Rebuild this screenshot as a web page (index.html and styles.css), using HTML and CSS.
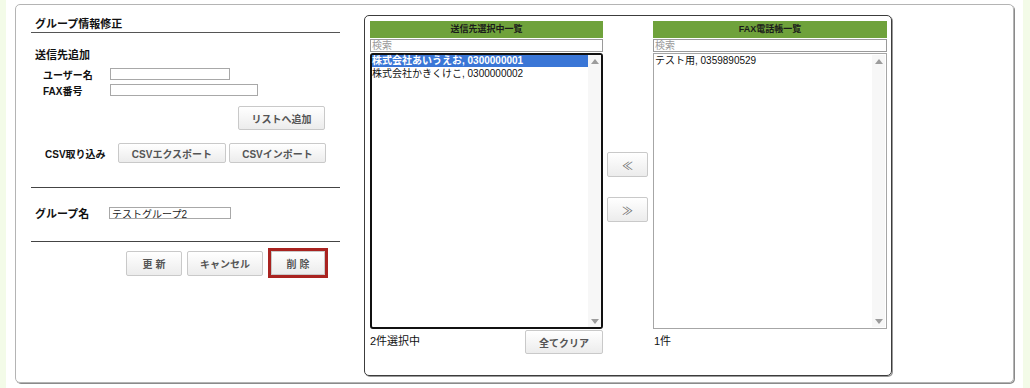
FILE: index.html
```html
<!DOCTYPE html>
<html lang="ja">
<head>
<meta charset="utf-8">
<title>グループ情報修正</title>
<link rel="stylesheet" href="styles.css">
</head>
<body>
<div class="page">
  <div class="strip strip-left"></div>
  <div class="panel">
    <section class="editor">
      <div class="editor-title">グループ情報修正</div>
      <div class="section-label">送信先追加</div>
      <div class="field-row">
        <span class="field-label">ユーザー名</span>
        <input class="text-input input-name" type="text">
      </div>
      <div class="field-row">
        <span class="field-label">FAX番号</span>
        <input class="text-input input-fax" type="text">
      </div>
      <div class="add-row">
        <button class="btn btn-add">リストへ追加</button>
      </div>
      <div class="csv-row">
        <span class="csv-label">CSV取り込み</span>
        <button class="btn btn-export">CSVエクスポート</button>
        <button class="btn btn-import">CSVインポート</button>
      </div>
      <div class="divider divider-1"></div>
      <div class="group-row">
        <span class="group-label">グループ名</span>
        <input class="text-input input-group" type="text" value="テストグループ2">
      </div>
      <div class="divider divider-2"></div>
      <div class="action-row">
        <button class="btn btn-update">更 新</button>
        <button class="btn btn-cancel">キャンセル</button>
        <span class="delete-frame"><button class="btn btn-delete">削 除</button></span>
      </div>
    </section>

    <section class="picker">
      <div class="list-col">
        <div class="list-header">送信先選択中一覧</div>
        <input class="search-input" type="text" placeholder="検索">
        <div class="list-box list-box-selected">
          <ul class="list-items">
            <li class="item item-active">株式会社あいうえお, 0300000001</li>
            <li class="item">株式会社かきくけこ, 0300000002</li>
          </ul>
          <div class="scroll-track">
            <span class="arrow-up"></span>
            <span class="arrow-down"></span>
          </div>
        </div>
        <div class="list-footer">
          <span class="count">2件選択中</span>
          <button class="btn btn-clear">全てクリア</button>
        </div>
      </div>

      <div class="move-col">
        <button class="btn btn-move btn-move-left">≪</button>
        <button class="btn btn-move btn-move-right">≫</button>
      </div>

      <div class="list-col list-col-right">
        <div class="list-header">FAX電話帳一覧</div>
        <input class="search-input" type="text" placeholder="検索">
        <div class="list-box list-box-book">
          <ul class="list-items">
            <li class="item">テスト用, 0359890529</li>
          </ul>
          <div class="scroll-track">
            <span class="arrow-up"></span>
            <span class="arrow-down"></span>
          </div>
        </div>
        <div class="list-footer">
          <span class="count">1件</span>
        </div>
      </div>
    </section>
  </div>
  <div class="strip strip-right"></div>
</div>
</body>
</html>
```

FILE: styles.css
```css
* { box-sizing: border-box; }

html, body {
  margin: 0;
  padding: 0;
  background: #ffffff;
}

body {
  font-family: "Liberation Sans", "Noto Sans CJK JP", sans-serif;
  color: #111;
  font-size: 11px;
}

.page {
  display: flex;
  width: 1030px;
  height: 388px;
}

.strip {
  background: #f3fbe8;
  height: 388px;
}
.strip-left { width: 6px; }
.strip-right { width: 7px; margin-left: 9px; }

.panel {
  flex: 0 0 999px;
  margin: 4px 0 5px 9px;
  height: 379px;
  border: 1px solid #b4b4b4;
  border-radius: 5px;
  box-shadow: 1px 1px 0 #8a8a8a;
  display: flex;
  padding-left: 15px;
}

/* ---------- left editor ---------- */
.editor {
  width: 309px;
  display: flex;
  flex-direction: column;
}

.editor-title {
  margin-top: 11px;
  line-height: 16px;
  height: 17px;
  padding-left: 4px;
  font-size: 11px;
  font-weight: bold;
  border-bottom: 1px solid #555;
}

.section-label {
  margin-top: 14px;
  line-height: 16px;
  padding-left: 4px;
  font-size: 11px;
  font-weight: bold;
}

.field-row {
  display: flex;
  align-items: center;
  height: 16px;
}
.section-label + .field-row { margin-top: 3px; }

.field-label {
  width: 79px;
  padding-left: 12px;
  font-size: 10px;
  font-weight: bold;
}

.text-input {
  height: 12px;
  border: 1px solid #a8a8a8;
  padding: 0 2px;
  margin: 0;
  font-family: "Liberation Sans", "Noto Sans CJK JP", sans-serif;
  font-size: 10px;
  line-height: 10px;
  color: #222;
  background: #fff;
  outline: none;
}
.input-name { width: 120px; }
.input-fax { width: 148px; }
.input-group { width: 122px; }

.btn {
  background: linear-gradient(#ffffff, #ececec);
  border: 1px solid #c9c9c9;
  border-radius: 2px;
  font-family: "Liberation Sans", "Noto Sans CJK JP", sans-serif;
  font-size: 10px;
  font-weight: bold;
  color: #555;
  padding: 0;
  margin: 0;
  cursor: pointer;
}

.add-row {
  display: flex;
  justify-content: flex-end;
  margin-top: 8px;
  padding-right: 15px;
}
.btn-add { width: 87px; height: 24px; }

.csv-row {
  display: flex;
  align-items: center;
  margin-top: 13px;
}
.csv-label {
  width: 87px;
  padding-left: 14px;
  font-size: 10px;
  font-weight: bold;
}
.btn-export { width: 108px; height: 20px; }
.btn-import { width: 97px; height: 20px; margin-left: 3px; }

.divider {
  height: 1px;
  background: #444;
}
.divider-1 { margin-top: 24px; }
.divider-2 { margin-top: 20px; }

.group-row {
  display: flex;
  align-items: center;
  height: 16px;
  margin-top: 17px;
}
.group-label {
  width: 78px;
  padding-left: 4px;
  font-size: 11px;
  font-weight: bold;
}

.action-row {
  display: flex;
  justify-content: flex-end;
  align-items: center;
  margin-top: 6px;
  padding-right: 12px;
}
.btn-update { width: 56px; height: 25px; }
.btn-cancel { width: 76px; height: 25px; margin-left: 5px; }
.delete-frame {
  display: flex;
  margin-left: 5px;
  border: 3px solid #a92320;
  background: #fff;
}
.btn-delete {
  width: 54px;
  height: 24px;
  border-radius: 0;
}

/* ---------- picker ---------- */
.picker {
  margin-left: 24px;
  margin-top: 10px;
  width: 528px;
  height: 361px;
  border: 1px solid #3c3c3c;
  border-radius: 5px;
  box-shadow: 1px 1px 0 #9a9a9a;
  display: flex;
  padding: 5px 4px 0 5px;
}

.list-col {
  width: 233px;
  display: flex;
  flex-direction: column;
}
.list-col-right {
  width: 234px;
  margin-left: 5px;
}

.list-header {
  height: 17px;
  line-height: 17px;
  background: #6fa23b;
  text-align: center;
  font-size: 9px;
  font-weight: bold;
  color: #1a1a1a;
}

.search-input {
  margin: 1px 0 0 0;
  height: 13px;
  width: 100%;
  border: 1px solid #9a9a9a;
  padding: 0 1px;
  font-family: "Liberation Sans", "Noto Sans CJK JP", sans-serif;
  font-size: 10px;
  line-height: 11px;
  outline: none;
}
.search-input::placeholder { color: #9a9a9a; }

.list-box {
  margin-top: 1px;
  height: 276px;
  display: flex;
  background: #fff;
}
.list-box-selected {
  border: 2px solid #111;
  border-radius: 3px;
}
.list-box-book {
  border: 1px solid #a6a6a6;
  padding: 1px;
}

.list-items {
  list-style: none;
  margin: 0;
  padding: 0;
  flex: 1;
}

.item {
  height: 12px;
  line-height: 12px;
  font-size: 10px;
  color: #111;
  white-space: nowrap;
  margin-bottom: 1px;
}
.item-active {
  background: #3a76d6;
  color: #fff;
  font-weight: bold;
}

.scroll-track {
  width: 13px;
  background: #f7f7f7;
  display: flex;
  flex-direction: column;
  justify-content: space-between;
  align-items: center;
  padding: 4px 0 3px 0;
}
.arrow-up {
  width: 0;
  height: 0;
  border-left: 4px solid transparent;
  border-right: 4px solid transparent;
  border-bottom: 5px solid #9c9c9c;
}
.arrow-down {
  width: 0;
  height: 0;
  border-left: 4px solid transparent;
  border-right: 4px solid transparent;
  border-top: 5px solid #9c9c9c;
}

.list-footer {
  display: flex;
  justify-content: space-between;
  align-items: flex-start;
}
.count {
  margin-top: 4px;
  line-height: 16px;
  font-size: 11px;
  color: #111;
}
.btn-clear {
  margin-top: 1px;
  width: 78px;
  height: 24px;
}
.list-col-right .count { padding-left: 1px; }

.move-col {
  width: 41px;
  margin-left: 4px;
  display: flex;
  flex-direction: column;
}
.btn-move {
  width: 41px;
  height: 25px;
  font-size: 11px;
  font-weight: normal;
  color: #666;
}
.btn-move-left { margin-top: 131px; }
.btn-move-right { margin-top: 20px; }
```
